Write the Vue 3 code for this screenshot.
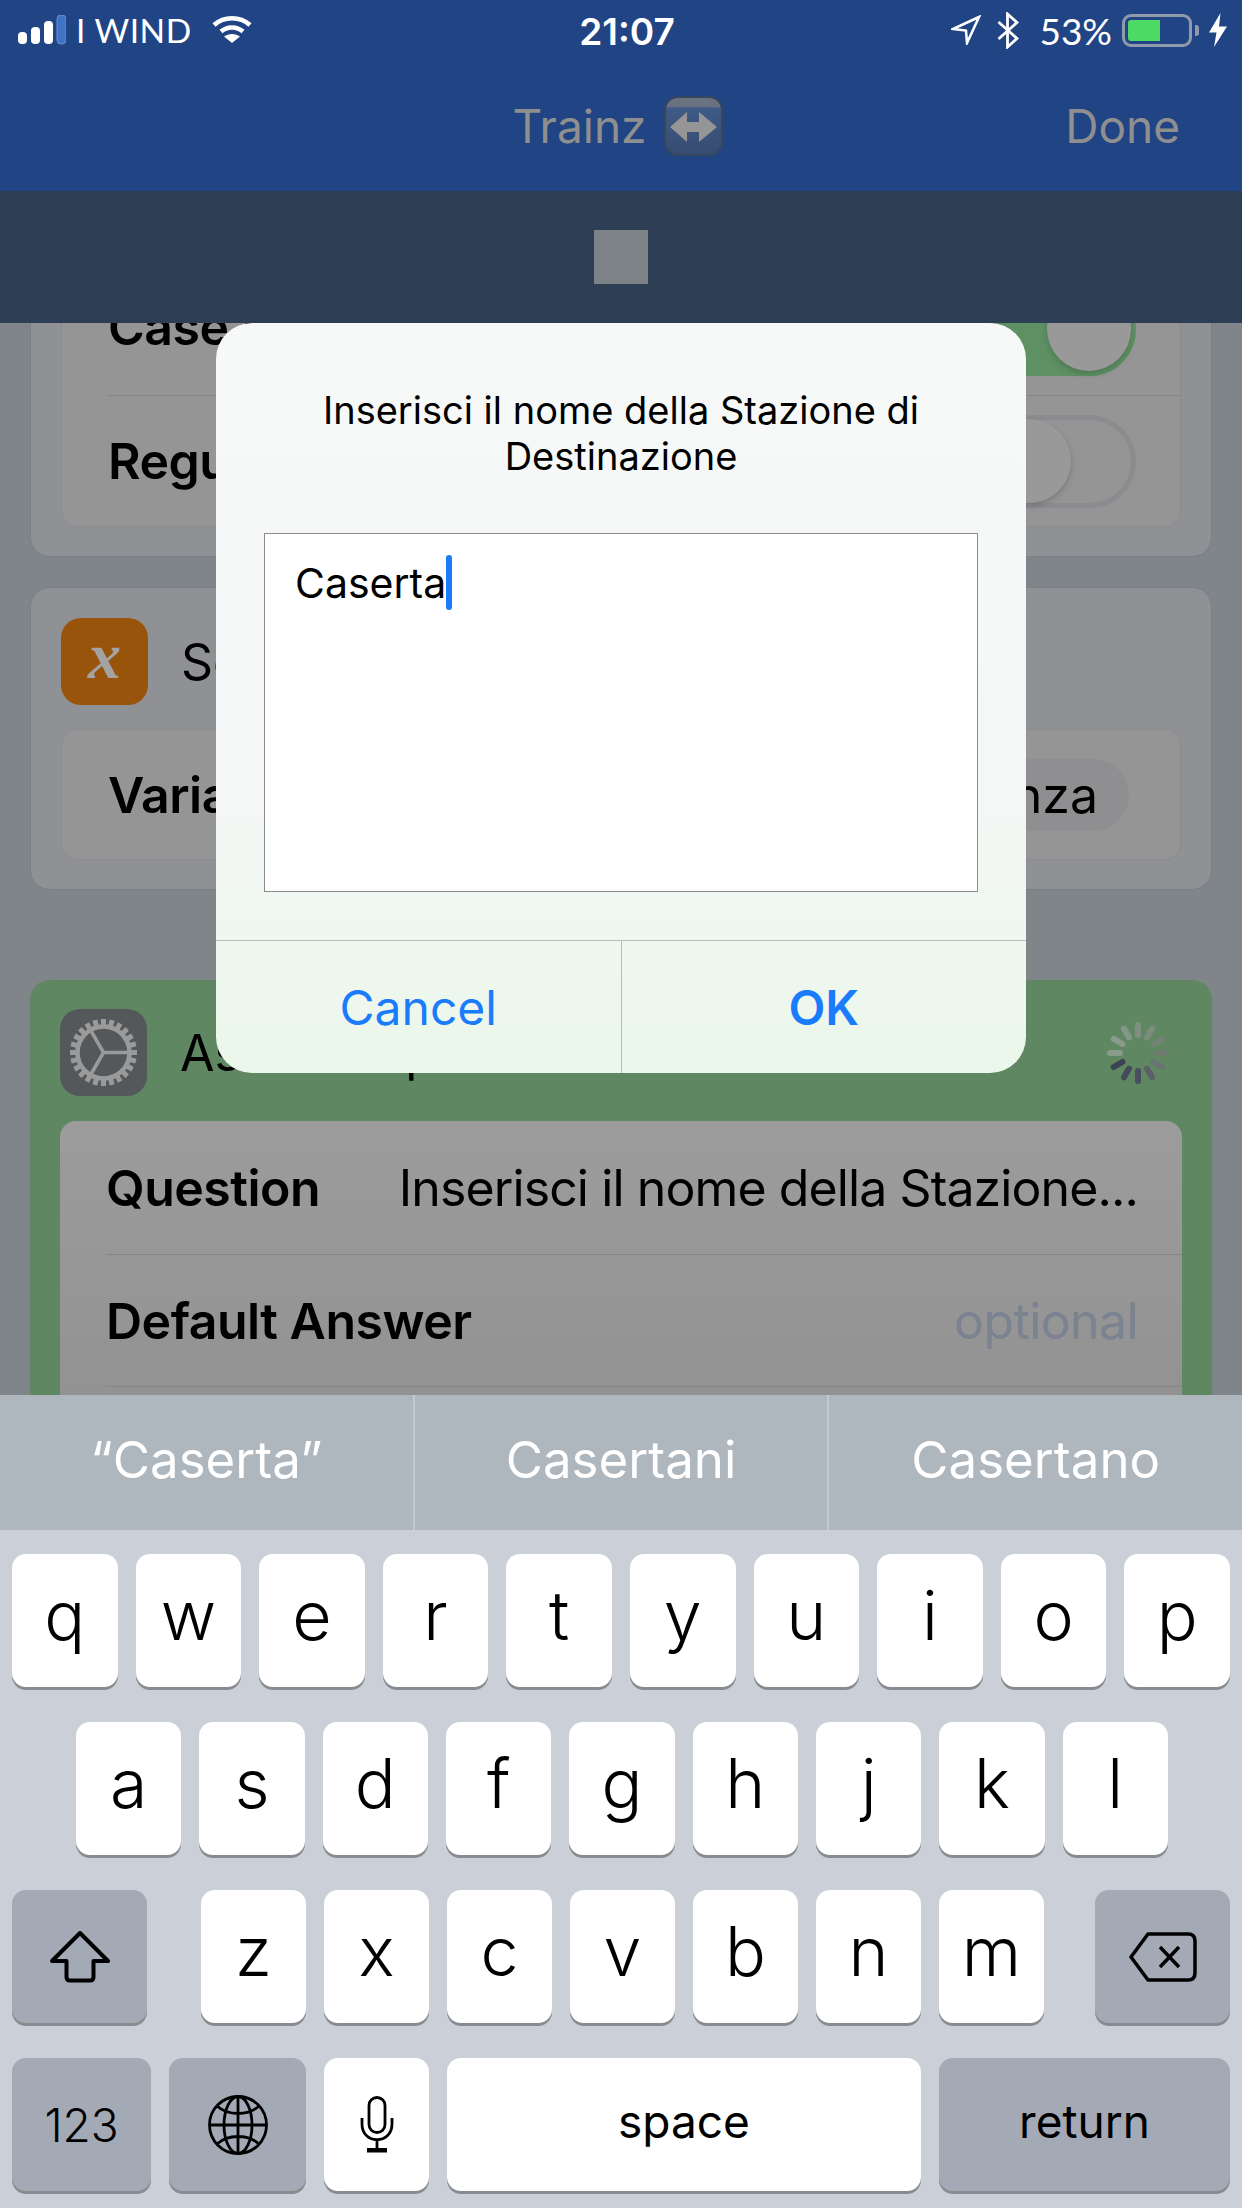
<script setup>
const row1 = ['q', 'w', 'e', 'r', 't', 'y', 'u', 'i', 'o', 'p']
const row2 = ['a', 's', 'd', 'f', 'g', 'h', 'j', 'k', 'l']
const row3 = ['z', 'x', 'c', 'v', 'b', 'n', 'm']
const suggestions = ['“Caserta”', 'Casertani', 'Casertano']

const signal = [
  { x: 0, h: 12 },
  { x: 13, h: 17 },
  { x: 26, h: 23 },
]

const teeth = Array.from({ length: 24 }, (_, i) => i * 15)

// one colour per clock hour, darkest at 8, lightest at 9
const spinnerColors = ['#7f9080', '#7c8d7e', '#738476', '#6f7d70', '#697570', '#5b5f66', '#484e5b', '#434a58', '#3b4250', '#8a9a8b', '#8a9a8b', '#84958a']
const spinner = spinnerColors.map((color, i) => ({ angle: i * 30, color }))
</script>

<template>
  <div class="screen">
    <header class="top">
      <div class="status">
        <div class="status-left">
          <svg class="signal" width="48" height="30" viewBox="0 0 48 30">
            <rect v-for="bar in signal" :key="bar.x" :x="bar.x" :y="29 - bar.h" width="9" :height="bar.h" rx="4" fill="#fff" />
            <rect x="39" y="0" width="9" height="29" rx="4" fill="#3f74c4" stroke="#6c8fc8" stroke-width="1" />
          </svg>
          <span class="carrier">I WIND</span>
          <svg class="wifi" width="40" height="28" viewBox="0 0 40 28">
            <path d="M2 9 C12 0 28 0 38 9" fill="none" stroke="#fff" stroke-width="4.5" />
            <path d="M9 15.5 C15 10 25 10 31 15.5" fill="none" stroke="#fff" stroke-width="4.5" />
            <path d="M20 27 L12 20.5 C16.500 17 23.500 17 28 20.5 Z" fill="#fff" />
          </svg>
        </div>
        <div class="time">21:07</div>
        <div class="status-right">
          <svg class="arrow-icon" width="30" height="30" viewBox="0 0 30 30">
            <path d="M28 2 L2 14 L15 15.500 L16 28 Z" fill="none" stroke="#fff" stroke-width="2.500" stroke-linejoin="miter" />
          </svg>
          <svg class="bt-icon" width="22" height="37" viewBox="0 0 22 37">
            <path d="M1.500 10 L20 26.500 L10.500 35 V2 L20 10.500 L1.500 27" fill="none" stroke="#fff" stroke-width="2.800" />
          </svg>
          <span class="percent">53%</span>
          <div class="battery"><div class="battery-fill"></div></div>
          <div class="battery-nub"></div>
          <svg class="bolt" width="18" height="34" viewBox="0 0 18 34">
            <path d="M11.500 0 L0 19.500 H7.500 L5 34 L18 13.500 H10 Z" fill="#fff" />
          </svg>
        </div>
      </div>
      <nav class="nav">
        <div></div>
        <div class="nav-title">
          <span>Trainz</span>
          <svg class="app-icon" width="59" height="60" viewBox="0 0 59 60">
            <defs>
              <linearGradient id="appBg" x1="0" y1="0" x2="0" y2="1">
                <stop offset="0" stop-color="#6a7180" />
                <stop offset="0.16" stop-color="#6a7180" />
                <stop offset="0.2" stop-color="#3f5a86" />
                <stop offset="1" stop-color="#374c70" />
              </linearGradient>
            </defs>
            <rect x="1" y="1" width="57" height="58" rx="13" fill="url(#appBg)" stroke="#36465e" stroke-width="2" />
            <path d="M6 31 L23 16 V26 H35 V16 L53 31 L35 46 V36 H23 V46 Z" fill="#959595" />
          </svg>
        </div>
        <div class="nav-done">Done</div>
      </nav>
      <div class="stopbar"><div class="stop"></div></div>
    </header>

    <main class="content">
      <div class="scroll">
        <section class="card">
          <div class="inner">
            <div class="row nudge">
              <span class="label">Case Sensitive</span>
              <div class="toggle on"><div class="knob"></div></div>
            </div>
            <div class="row line">
              <span class="label">Regular Expression</span>
              <div class="toggle"><div class="knob"></div></div>
            </div>
          </div>
        </section>

        <section class="card">
          <div class="card-head">
            <div class="tile orange"><span class="var-x">x</span></div>
            <span class="card-title">Set Variable</span>
          </div>
          <div class="inner single">
            <div class="row">
              <span class="label">Variable</span>
              <span class="chip">Distanza</span>
            </div>
          </div>
        </section>

        <section class="card green">
          <div class="card-head">
            <div class="tile dark">
              <svg width="87" height="87" viewBox="0 0 87 87">
                <g fill="#9a9a9a">
                  <rect v-for="a in teeth" :key="a" x="41" y="10" width="5" height="9" :transform="`rotate(${a} 43.500 43.500)`" />
                </g>
                <circle cx="43.500" cy="43.500" r="26" fill="none" stroke="#9a9a9a" stroke-width="4.500" />
                <path d="M43.500 43.500 H69 M43.500 43.500 L30.500 66 M43.500 43.500 L30.500 21" fill="none" stroke="#9a9a9a" stroke-width="3.500" />
              </svg>
            </div>
            <span class="card-title">Ask for Input</span>
            <svg class="spinner" width="64" height="64" viewBox="0 0 64 64">
              <rect
                v-for="bar in spinner"
                :key="bar.angle"
                x="29"
                y="1"
                width="6"
                height="16"
                rx="3"
                :fill="bar.color"
                :transform="`rotate(${bar.angle} 32 32)`"
              />
            </svg>
          </div>
          <div class="inner light">
            <div class="row">
              <span class="label">Question</span>
              <span class="value">Inserisci il nome della Stazione...</span>
            </div>
            <div class="row line">
              <span class="label">Default Answer</span>
              <span class="value placeholder">optional</span>
            </div>
            <div class="row line"></div>
          </div>
        </section>
      </div>
    </main>

    <div class="suggestions">
      <div v-for="word in suggestions" :key="word" class="suggestion">{{ word }}</div>
    </div>

    <div class="keyboard">
      <div class="key-row">
        <div v-for="k in row1" :key="k" class="key grow">{{ k }}</div>
      </div>
      <div class="key-row indent">
        <div v-for="k in row2" :key="k" class="key grow">{{ k }}</div>
      </div>
      <div class="key-row spread">
        <div class="key fn shift">
          <svg width="60" height="52" viewBox="0 0 60 52">
            <path d="M30 2 L58 30 H43.500 V46 Q43.500 49.500 40 49.500 H20 Q16.500 49.500 16.500 46 V30 H2 Z" fill="none" stroke="#000" stroke-width="4" stroke-linejoin="round" />
          </svg>
        </div>
        <div class="letters">
          <div v-for="k in row3" :key="k" class="key letter">{{ k }}</div>
        </div>
        <div class="key fn shift">
          <svg width="68" height="50" viewBox="0 0 68 50">
            <path d="M19 2 H59 Q66 2 66 9 V41 Q66 48 59 48 H19 L2 25 Z" fill="none" stroke="#000" stroke-width="3.500" stroke-linejoin="round" />
            <path d="M31 15 L50 35 M50 15 L31 35" fill="none" stroke="#000" stroke-width="3.500" />
          </svg>
        </div>
      </div>
      <div class="key-row">
        <div class="key fn small num">123</div>
        <div class="key fn globe">
          <svg width="60" height="60" viewBox="0 0 60 60">
            <g fill="none" stroke="#000" stroke-width="2.800">
              <circle cx="30" cy="30" r="28.500" />
              <ellipse cx="30" cy="30" rx="14" ry="28.500" />
              <path d="M30 1.500 V58.500 M1.500 30 H58.500 M9 11 C20 21 40 21 51 11 M9 49 C20 39 40 39 51 49" />
            </g>
          </svg>
        </div>
        <div class="key letter">
          <svg width="34" height="57" viewBox="0 0 34 57">
            <g fill="none" stroke="#000" stroke-width="2.800">
              <rect x="9" y="1.500" width="16" height="35" rx="8" />
              <path d="M2 22 V28 C2 49 32 49 32 28 V22 M17 43 V54" />
            </g>
            <path d="M7 52 H27 V56.500 H7 Z" fill="#000" />
          </svg>
        </div>
        <div class="key small grow">space</div>
        <div class="key fn small return">return</div>
      </div>
    </div>

    <div class="dialog">
      <p class="dialog-title">Inserisci il nome della Stazione di Destinazione</p>
      <div class="dialog-input">
        <span>Caserta</span><i class="caret"></i>
      </div>
      <div class="dialog-actions">
        <div class="action">Cancel</div>
        <div class="action strong">OK</div>
      </div>
    </div>
  </div>
</template>

<style>
html, body { margin: 0; background: #80858a; }
</style>

<style scoped>
.screen {
  position: relative;
  width: 1242px;
  height: 2208px;
  display: flex;
  flex-direction: column;
  overflow: hidden;
  background: #80858a;
  font-family: Inter, "Liberation Sans", sans-serif;
  color: #000;
}

.top { position: relative; z-index: 2; flex: none; }
.status {
  height: 60px;
  background: #214484;
  display: grid;
  grid-template-columns: 1fr auto 1fr;
  align-items: center;
  color: #fff;
}
.status-left { display: flex; align-items: center; padding-left: 18px; }
.signal { margin-top: -1px; }
.carrier { font-family: Lato, Inter, sans-serif; font-size: 33.500px; margin-left: 10px; letter-spacing: 0.5px; }
.wifi { margin-left: 20px; margin-top: -1px; }
.time { font-size: 37px; font-weight: 600; padding-left: 12px; padding-top: 2px; }
.status-right { display: flex; align-items: center; justify-content: flex-end; padding-right: 15px; }
.arrow-icon { margin-right: 16px; }
.bt-icon { margin-right: 20px; }
.percent { font-family: Lato, Inter, sans-serif; font-size: 37px; margin-right: 10px; }
.battery {
  width: 70px;
  height: 33px;
  box-sizing: border-box;
  border: 3px solid #8f9aab;
  border-radius: 9px;
  padding: 3px;
}
.battery-fill { width: 32px; height: 100%; background: #4cd964; border-radius: 3px 0 0 3px; }
.battery-nub { width: 4px; height: 11px; margin-left: 3px; margin-right: 10px; background: #8f9aab; border-radius: 0 3px 3px 0; }

.nav {
  height: 131px;
  background: #214484;
  display: grid;
  grid-template-columns: 1fr auto 1fr;
  align-items: center;
  color: #8f8f8f;
  font-size: 46px;
}
.nav-title { display: flex; align-items: center; gap: 18px; margin-left: -6px; }
.nav-done { text-align: right; padding-right: 62px; }
.stopbar {
  height: 132px;
  background: #2e3e55;
  display: flex;
  align-items: center;
  justify-content: center;
}
.stop { width: 54px; height: 54px; background: #7d8286; }

.content { flex: 1; min-height: 0; overflow: hidden; }
.scroll { margin-top: -91px; padding: 0 30px; display: flex; flex-direction: column; }
.card {
  background: #8f9194;
  border: 1px solid #7b8088;
  border-radius: 20px;
  padding: 30px 30px 29px;
  margin-bottom: 30px;
}
.card.green { background: #5f8762; border: none; margin-top: 60px; padding: 29px 30px 0; }
.card-head { display: flex; align-items: center; margin-bottom: 24px; }
.green .card-head { margin-bottom: 25px; }
.tile {
  width: 87px;
  height: 87px;
  flex: none;
  border-radius: 20px;
  display: flex;
  align-items: center;
  justify-content: center;
}
.tile svg { display: block; }
.orange { background: #99540c; }
.dark { background: #55585b; }
.var-x {
  font-family: "Liberation Serif", serif;
  font-style: italic;
  font-weight: 700;
  font-size: 66px;
  line-height: 1;
  color: #a3a3a3;
  margin-top: -12px;
}
.card-title { font-size: 50px; margin-left: 33px; }
.spinner { margin-left: auto; margin-right: 12px; }

.inner { background: #959595; border: 1px solid #8a8c8f; border-radius: 16px; }
.inner.light { background: linear-gradient(#9c9c9c, #8e8e8e); border: none; }
.row {
  height: 131px;
  display: flex;
  align-items: center;
  justify-content: space-between;
  margin-left: 46px;
  padding-right: 44px;
}
.row.line { height: 130px; border-top: 1.500px solid #868686; }
.row.nudge .label { margin-top: -6px; }
.single .row { height: 129px; }
.light .row { height: 133px; }
.light .row.line { height: 131px; }
.label { font-size: 50px; font-weight: 600; letter-spacing: -0.5px; }
.value { font-size: 50px; letter-spacing: -0.9px; white-space: nowrap; }
.placeholder { color: #7b8290; letter-spacing: -0.6px; }
.chip {
  background: #8f8f91;
  height: 72px;
  line-height: 72px;
  border-radius: 36px;
  font-size: 50px;
  padding: 0 31px;
  margin-right: 7px;
}

.toggle {
  width: 153px;
  height: 93px;
  box-sizing: border-box;
  border: 5px solid #8a8c90;
  border-radius: 47px;
  position: relative;
}
.toggle.on { background: #5e9064; border-color: #5e9064; }
.knob {
  width: 84px;
  height: 84px;
  border-radius: 50%;
  background: #999;
  position: absolute;
  top: -1px;
  left: -1px;
  box-shadow: 0 3px 6px rgba(0, 0, 0, 0.18);
}
.toggle.on .knob { left: auto; right: 0; }

.suggestions {
  position: relative;
  z-index: 2;
  flex: none;
  height: 135px;
  background: #aeb6be;
  display: flex;
}
.suggestion {
  flex: 1;
  display: flex;
  align-items: center;
  justify-content: center;
  color: #fff;
  font-size: 51px;
  padding-bottom: 6px;
  border-right: 2px solid #c4c9d0;
}
.suggestion:last-child { border-right: none; }

.keyboard {
  position: relative;
  z-index: 2;
  flex: none;
  height: 678px;
  box-sizing: border-box;
  background: #cbd0d8;
  padding: 24px 12px 0;
  display: flex;
  flex-direction: column;
  gap: 35px;
}
.key-row { display: flex; gap: 18px; }
.key-row.indent { padding: 0 62px 0 64px; }
.key-row.spread { justify-content: space-between; }
.letters { display: flex; gap: 18px; margin-left: 3px; }
.key {
  height: 133px;
  background: #fff;
  border-radius: 14px;
  box-shadow: 0 3px 0 #888b8f;
  display: flex;
  align-items: center;
  justify-content: center;
  font-size: 68px;
  font-weight: 300;
  padding-bottom: 12px;
  box-sizing: border-box;
}
.key svg { display: block; margin-top: 12px; }
.grow { flex: 1; }
.letter { width: 105px; }
.fn { background: #a3a9b5; }
.shift { width: 135px; }
.small { font-size: 46px; font-weight: 400; padding-bottom: 8px; }
.num { width: 139px; font-weight: 300; padding-bottom: 0; }
.globe { width: 137px; }
.return { width: 291px; }

.dialog {
  position: absolute;
  z-index: 3;
  left: 216px;
  top: 323px;
  width: 810px;
  height: 750px;
  border-radius: 36px;
  background: linear-gradient(#f7f9f8 0%, #f4f7f5 65%, #ebf7ea 100%);
  display: flex;
  flex-direction: column;
  overflow: hidden;
}
.dialog-title {
  margin: 64px 48px 0;
  font-size: 38px;
  line-height: 46px;
  text-align: center;
  height: 146px;
}
.dialog-input {
  margin: 0 48px;
  height: 359px;
  box-sizing: border-box;
  background: #fff;
  border: 1px solid #8d8d8d;
  padding: 24px 30px;
  font-size: 41px;
  line-height: 50px;
  display: flex;
  align-items: flex-start;
}
.caret {
  width: 6px;
  height: 55px;
  border-radius: 3px;
  background: #1a7cfa;
  margin-top: -3px;
}
.dialog-actions {
  margin-top: auto;
  height: 132px;
  display: flex;
  border-top: 1px solid #b4bcc2;
}
.action {
  flex: 1;
  display: flex;
  align-items: center;
  justify-content: center;
  color: #1a7cfa;
  font-size: 48px;
}
.action + .action { border-left: 1px solid #b4bcc2; }
.strong { font-weight: 600; }
</style>
